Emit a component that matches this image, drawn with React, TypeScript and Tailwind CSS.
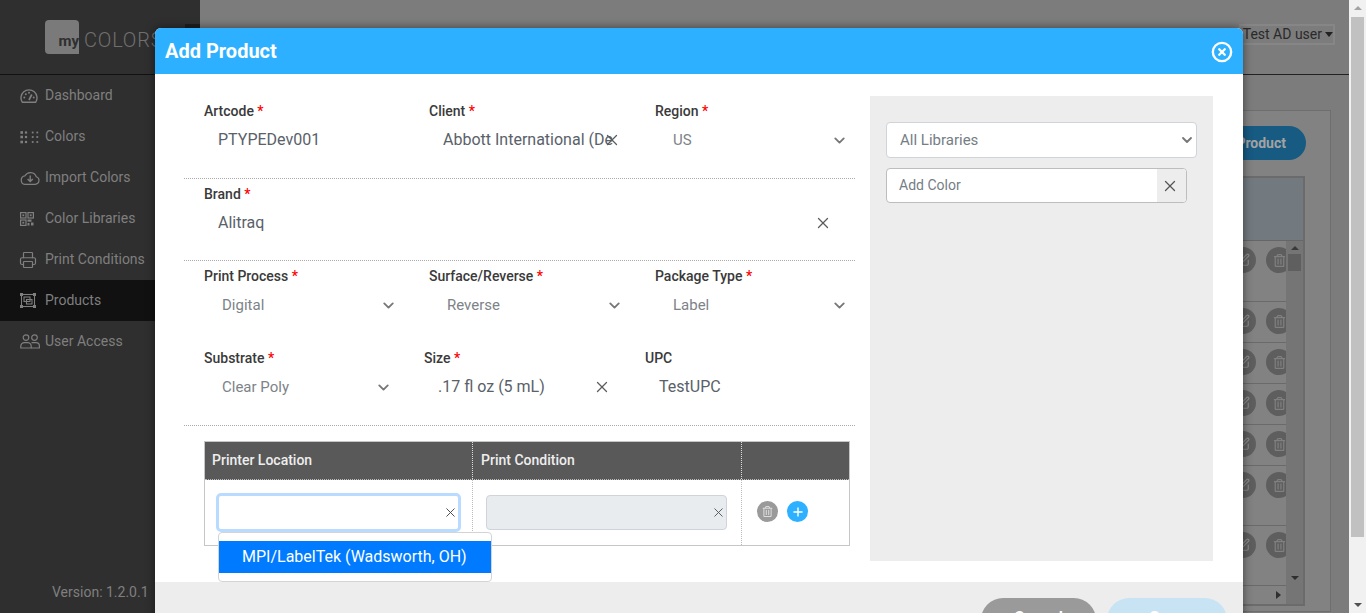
import React from "react";
import { X, ChevronDown, Plus, Printer, CircleX, SquarePen } from "lucide-react";
import { FaRegTrashAlt } from "react-icons/fa";

const labelCls = "block text-[14px] leading-[21px] font-medium text-[#3a3a3a]";
const valueCls = "h-[36px] pl-[14px] flex items-center text-[16px] text-[#596169]";

const Req = ({ children }: { children: React.ReactNode }) => (
  <label className={labelCls}>
    {children} <span className="text-[#f00]">*</span>
  </label>
);

const FieldX = () => <X size={18} strokeWidth={1.7} className="text-[#5c5c5c] -mx-[2px] shrink-0" />;

function SelectField({ label, value, w }: { label: string; value: string; w: string }) {
  return (
    <div className={w}>
      <Req>{label}</Req>
      <div className="flex items-center h-[36px] pl-[18px] text-[15px] text-[#7d8388]">
        <span className="flex-1">{value}</span>
        <ChevronDown size={17} strokeWidth={2.6} className="text-[#777] -mx-[2px]" />
      </div>
    </div>
  );
}

function DashboardIcon() {
  return (
    <svg width="18" height="14" viewBox="0 0 18 14" fill="none" stroke="#7f7f7f">
      <path d="M2.3 13.2 A8 8 0 1 1 15.7 13.2 Z" strokeWidth="1.4" />
      <g fill="#7f7f7f" stroke="none">
        <circle cx="4.3" cy="8.5" r="1" />
        <circle cx="5.8" cy="5.2" r="1" />
        <circle cx="9" cy="3.8" r="1" />
        <circle cx="13.7" cy="8.5" r="1" />
      </g>
      <path d="M9 11 L11.8 5.5" strokeWidth="1.7" />
    </svg>
  );
}

function DotsIcon() {
  const cols = [
    { x: 1.7, s: 2.6 },
    { x: 6, s: 2.2 },
    { x: 12.7, s: 1.8 },
    { x: 17.3, s: 1.8 },
  ];
  return (
    <svg width="20" height="14" viewBox="0 0 20 14" fill="#7f7f7f">
      {cols.map((c) =>
        [2.5, 7, 12].map((y) => (
          <rect key={c.x + "-" + y} x={c.x - c.s / 2} y={y - c.s / 2} width={c.s} height={c.s} />
        ))
      )}
    </svg>
  );
}

function CloudIcon() {
  return (
    <svg width="20" height="14" viewBox="0 0 20 14" fill="none" stroke="#7f7f7f" strokeWidth="1.2">
      <path d="M4.8 13.3 H15.2 A3.9 3.9 0 0 0 16.3 5.7 A6.2 6.2 0 0 0 5 4.8 A4.3 4.3 0 0 0 4.8 13.3 Z" />
      <path d="M10.2 4.5 V10.3 M7.6 8 L10.2 10.6 L12.8 8" strokeWidth="1.4" />
    </svg>
  );
}

function LibrariesIcon() {
  return (
    <svg width="14" height="14" viewBox="0 0 14 14" fill="none" stroke="#7f7f7f" strokeWidth="1.2">
      <rect x="0.6" y="0.6" width="5.4" height="5.4" />
      <rect x="8" y="0.6" width="5.4" height="5.4" />
      <rect x="0.6" y="8" width="5.4" height="5.4" />
      <g fill="#7f7f7f" stroke="none">
        <rect x="2.4" y="2.4" width="1.8" height="1.8" />
        <rect x="9.8" y="2.4" width="1.8" height="1.8" />
        <rect x="2.4" y="9.8" width="1.8" height="1.8" />
        <rect x="7.5" y="7.5" width="4" height="2.2" />
        <rect x="7.5" y="11" width="2" height="2.5" />
        <rect x="11" y="10.5" width="2.5" height="3" />
      </g>
    </svg>
  );
}

function ProductsIcon() {
  return (
    <svg width="16" height="15" viewBox="0 0 16 15" fill="none" stroke="#7f7f7f" strokeWidth="1.1">
      <rect x="1.5" y="1.5" width="13" height="12" />
      <rect x="4" y="4" width="6" height="4.5" />
      <rect x="6.5" y="6.5" width="5.5" height="4.5" />
      <g fill="#7f7f7f" stroke="none">
        <rect x="0" y="0" width="3" height="3" />
        <rect x="13" y="0" width="3" height="3" />
        <rect x="0" y="12" width="3" height="3" />
        <rect x="13" y="12" width="3" height="3" />
      </g>
    </svg>
  );
}

function UsersIcon() {
  return (
    <svg width="20" height="15" viewBox="0 0 20 15" fill="none" stroke="#7f7f7f" strokeWidth="1.2">
      <circle cx="6" cy="3.6" r="2.8" />
      <circle cx="14.5" cy="3.6" r="2.8" />
      <path d="M0.8 14 V12.2 A3.6 3.6 0 0 1 4.4 8.6 H7.6 A3.6 3.6 0 0 1 11.2 12.2 V14 Z" />
      <path d="M11.5 8.6 H16 A3.4 3.4 0 0 1 19.4 12 V14 H11.2" />
    </svg>
  );
}

const nav = [
  { t: "Dashboard", i: <DashboardIcon /> },
  { t: "Colors", i: <DotsIcon /> },
  { t: "Import Colors", i: <CloudIcon /> },
  { t: "Color Libraries", i: <LibrariesIcon /> },
  { t: "Print Conditions", i: <Printer size={18} strokeWidth={1.6} className="-ml-[1px]" /> },
  { t: "Products", i: <ProductsIcon />, active: true },
  { t: "User Access", i: <UsersIcon /> },
];

function BgRow({ h }: { h: string }) {
  return (
    <div className={`${h} border-b border-[#6a6a6a] flex items-start justify-end gap-[10px] -mr-[6px] pt-[6px]`}>
      <span className="w-[26px] h-[26px] rounded-full bg-[#5e5e5e] flex items-center justify-center">
        <SquarePen size={14} className="text-[#8a8a8a]" />
      </span>
      <span className="w-[26px] h-[26px] rounded-full bg-[#5e5e5e] flex items-center justify-center">
        <FaRegTrashAlt size={13} className="text-[#808080]" />
      </span>
    </div>
  );
}

export default function App() {
  return (
    <div className="relative w-[1366px] h-[613px] overflow-hidden flex font-['Roboto',sans-serif] bg-[#7c7c7c]">
      {/* Sidebar */}
      <aside className="relative w-[200px] shrink-0 bg-[#2f2f2f] flex flex-col">
        <div className="absolute left-[185px] top-[24px] w-[15px] h-[30px] bg-[#1e1e1e]" />
        <div className="h-[75px] border-b border-[#111] flex items-center pl-[45px] shrink-0">
          <div className="w-[34px] h-[34px] rounded-l-[4px] rounded-tr-[4px] bg-[#7a7a7a] flex items-end justify-end text-[15px] leading-[17px] font-bold text-[#2f2f2f] pb-[4px]">my</div>
          <span className="ml-[5px] mt-[6px] text-[20px] font-light tracking-[0.8px] text-[#6f6f6f]">COLORS</span>
        </div>
        <nav className="flex flex-col">
          {nav.map((n) => (
            <div key={n.t} className={`h-[41px] flex items-center text-[14px] text-[#7f7f7f] ${n.active ? "bg-[#111111]" : ""}`}>
              <span className="w-[45px] pl-[20px] flex items-center text-[#7f7f7f]">{n.i}</span>
              <span>{n.t}</span>
            </div>
          ))}
        </nav>
        <div className="mt-auto pb-[12px] pl-[52px] text-[14px] leading-[18px] text-[#7f7f7f]">Version: 1.2.0.1</div>
      </aside>

      {/* Page behind the dialog */}
      <main className="flex-1 min-w-0 flex flex-col bg-[#7c7c7c]">
        <header className="h-[75px] border-b border-[#222] shrink-0 flex justify-end items-start pt-[24px] pr-[14px]">
          <div className="h-[21px] pl-[2px] border-2 border-[#868686] flex items-center gap-[3px] text-[14px] text-[#2a2a2a]">
            Test AD user
            <span className="w-0 h-0 border-x-[4px] border-x-transparent border-t-[5px] border-t-[#222]" />
          </div>
        </header>
        <div className="flex-1 min-h-0 pl-[850px] pt-[35px] pr-[18px]">
          <div className="h-[502px] border border-[#6e6e6e] bg-[#828282] pl-[40px] pt-[15px] pr-[25px] flex flex-col items-end">
            <div className="w-[150px] h-[34px] -mr-[1px] rounded-full bg-[#175a82] flex items-center justify-end pr-[20px] text-[14px] font-bold text-[#a3a3a3] shrink-0">Add Product</div>
            <div className="w-full mt-[16px] h-[430px] border-2 border-[#6b6b6b] flex flex-col overflow-hidden shrink-0">
              <div className="h-[63px] bg-[#727a80] border-b border-[#666] shrink-0" />
              <div className="flex-1 min-h-0 flex">
                <div className="flex-1 min-w-0 flex flex-col overflow-hidden">
                  <BgRow h="h-[61px] shrink-0" />
                  <BgRow h="h-[41px] shrink-0" />
                  <BgRow h="h-[41px] shrink-0" />
                  <BgRow h="h-[41px] shrink-0" />
                  <BgRow h="h-[41px] shrink-0" />
                  <BgRow h="h-[60px] shrink-0" />
                  <BgRow h="h-[60px] shrink-0" />
                  <div className="flex-1 flex items-center">
                    <div className="w-[10px] h-[13px] bg-[#5f5f5f]" />
                    <span className="ml-auto mr-[5px] w-0 h-0 border-y-[4px] border-y-transparent border-l-[5px] border-l-[#2f2f2f]" />
                  </div>
                </div>
                <div className="w-[17px] bg-[#757575] flex flex-col items-center relative z-10">
                  <span className="mt-[5px] w-0 h-0 border-x-[4px] border-x-transparent border-b-[4px] border-b-[#3a3a3a]" />
                  <span className="mt-[4px] w-[13px] h-[17px] bg-[#5f5f5f]" />
                  <span className="mt-auto mb-[24px] w-0 h-0 border-x-[4px] border-x-transparent border-t-[4px] border-t-[#2f2f2f]" />
                </div>
              </div>
            </div>
          </div>
        </div>
      </main>

      {/* Browser scrollbar */}
      <div className="w-[17px] shrink-0 bg-[#f1f1f1] flex flex-col items-center">
        <span className="mt-[6px] w-0 h-0 border-x-[4px] border-x-transparent border-b-[4px] border-b-[#a3a3a3]" />
        <span className="mt-[7px] w-[13px] h-[520px] bg-[#c1c1c1]" />
        <span className="mt-auto mb-[6px] w-0 h-0 border-x-[4px] border-x-transparent border-t-[4px] border-t-[#505050]" />
      </div>

      {/* Dialog */}
      <div className="absolute left-[155px] top-[28px] w-[1088px] h-[640px] bg-white rounded-t-[6px] shadow-[0_0_10px_rgba(0,0,0,0.5)] flex flex-col">
        <div className="h-[46px] shrink-0 bg-[#2db0ff] rounded-t-[6px] flex items-center justify-between pl-[10px] pr-[10px]">
          <h2 className="text-[20px] font-bold text-white">Add Product</h2>
          <CircleX size={22} strokeWidth={2.6} className="text-white mt-[2px]" />
        </div>
        <div className="h-[508px] shrink-0 flex pt-[22px] pl-[29px]">
          <div className="w-[671px] shrink-0">
            {/* row 1 */}
            <div className="h-[83px] border-b border-dotted border-[#aaa] flex pl-[20px] pr-[9px] pt-[5px]">
              <div className="w-[225px]">
                <Req>Artcode</Req>
                <div className={valueCls}>PTYPEDev001</div>
              </div>
              <div className="w-[226px]">
                <Req>Client</Req>
                <div className={`${valueCls} w-[190px]`}>
                  <span className="flex-1 overflow-hidden whitespace-nowrap">Abbott International (De</span>
                  <X size={18} strokeWidth={1.7} className="text-[#5c5c5c] -ml-[11px] -mr-[2px] shrink-0" />
                </div>
              </div>
              <SelectField label="Region" value="US" w="flex-1" />
            </div>
            {/* row 2 */}
            <div className="h-[82px] border-b border-dotted border-[#aaa] pl-[20px] pr-[25px] pt-[5px]">
              <Req>Brand</Req>
              <div className={`${valueCls} h-[35px]`}>
                <span className="flex-1">Alitraq</span>
                <FieldX />
              </div>
            </div>
            {/* row 3 */}
            <div className="h-[82px] flex pl-[20px] pr-[9px] pt-[5px]">
              <SelectField label="Print Process" value="Digital" w="w-[225px] pr-[34px]" />
              <SelectField label="Surface/Reverse" value="Reverse" w="w-[226px] pr-[34px]" />
              <SelectField label="Package Type" value="Label" w="flex-1" />
            </div>
            {/* row 4 */}
            <div className="h-[83px] border-b border-dotted border-[#aaa] flex pl-[20px] pr-[9px] pt-[5px]">
              <SelectField label="Substrate" value="Clear Poly" w="w-[220px] pr-[34px]" />
              <div className="w-[221px]">
                <Req>Size</Req>
                <div className={`${valueCls} pr-[36px]`}>
                  <span className="flex-1">.17 fl oz (5 mL)</span>
                  <FieldX />
                </div>
              </div>
              <div className="flex-1">
                <label className={labelCls}>UPC</label>
                <div className={valueCls}>TestUPC</div>
              </div>
            </div>
            {/* table */}
            <div className="relative ml-[20px] mt-[15px] w-[646px] h-[105px] border border-[#c6c6c6] flex flex-col">
              <div className="h-[38px] shrink-0 bg-[#595959] flex text-[14px] font-medium text-[#eee] border-b border-dotted border-[#bbb]">
                <div className="w-[268px] pl-[7px] flex items-center border-r border-dotted border-[#ddd]">Printer Location</div>
                <div className="w-[269px] pl-[8px] flex items-center border-r border-dotted border-[#ddd]">Print Condition</div>
                <div className="flex-1" />
              </div>
              <div className="flex-1 flex">
                <div className="w-[268px] pl-[11px] pt-[13px] border-r border-dotted border-[#bbb]">
                  <div className="w-[245px] h-[39px] rounded-[5px] border-[3px] border-[#b8dbff] bg-white flex items-center justify-end">
                    <X size={15} strokeWidth={1.5} className="text-[#444]" />
                  </div>
                </div>
                <div className="w-[269px] pl-[13px] pt-[15px] border-r border-dotted border-[#bbb]">
                  <div className="w-[241px] h-[35px] rounded-[4px] border border-[#ced4da] bg-[#e9ecef] flex items-center justify-end">
                    <X size={15} strokeWidth={1.5} className="text-[#555]" />
                  </div>
                </div>
                <div className="flex-1 flex items-start gap-[9px] pl-[15px] pt-[21px]">
                  <span className="w-[21px] h-[21px] rounded-full bg-[#9a9a9a] flex items-center justify-center">
                    <FaRegTrashAlt size={11} className="text-[#ddd]" />
                  </span>
                  <span className="w-[21px] h-[21px] rounded-full bg-[#2db0ff] flex items-center justify-center">
                    <Plus size={14} strokeWidth={2.4} className="text-white" />
                  </span>
                </div>
              </div>
              {/* dropdown */}
              <div className="absolute left-[13px] top-[90px] w-[274px] h-[50px] bg-white border border-[#d4d4d4] rounded-[4px] pt-[8px] z-10">
                <div className="h-[32px] bg-[#007bff] text-white text-[16px] flex items-center pl-[23px]">MPI/LabelTek (Wadsworth, OH)</div>
              </div>
            </div>
          </div>
          {/* Right panel */}
          <div className="w-[343px] h-[465px] ml-[15px] bg-[#ededed] pt-[26px] pl-[16px] pr-[16px]">
            <div className="h-[36px] rounded-[4px] border border-[#ced4da] bg-white flex items-center pl-[13px] pr-[1px] text-[15px] text-[#757d85]">
              <span className="flex-1">All Libraries</span>
              <ChevronDown size={16} strokeWidth={2.8} className="text-[#777]" />
            </div>
            <div className="mt-[10px] w-[301px] h-[35px] rounded-[4px] border border-[#bdbdbd] bg-white flex overflow-hidden">
              <div className="flex-1 pl-[12px] flex items-center text-[14px] text-[#757d85]">Add Color</div>
              <div className="w-[29px] bg-[#ededed] flex items-center justify-center pr-[3px]">
                <X size={18} strokeWidth={1.7} className="text-[#555]" />
              </div>
            </div>
          </div>
        </div>
        {/* Footer */}
        <div className="flex-1 bg-[#ededed] flex items-start pt-[16px] pl-[60px] pr-[16px]">
          <span className="mt-[11px] text-[14px] text-[#3a3a3a]"><span className="text-[#f00]">*</span> Required Fields</span>
          <div className="ml-auto flex gap-[11px]">
            <div className="w-[115px] h-[44px] rounded-[22px] bg-[#9a9a9a] text-white text-[16px] leading-[18px] font-bold flex justify-center pt-[11px]">Cancel</div>
            <div className="w-[120px] h-[44px] rounded-[22px] bg-[#c8e4f4] text-white text-[16px] leading-[18px] font-bold flex justify-center pt-[11px]">Save</div>
          </div>
        </div>
      </div>
    </div>
  );
}
